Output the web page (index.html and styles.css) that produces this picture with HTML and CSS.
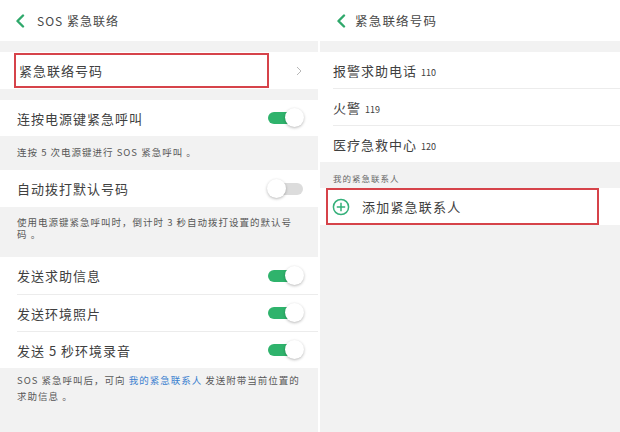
FILE: index.html
```html
<!DOCTYPE html>
<html lang="zh">
<head>
<meta charset="utf-8">
<link rel="stylesheet" href="styles.css">
</head>
<body>
<div class="screens">
  <section class="panel panel-left">
    <header class="topbar">
      <svg class="back" width="10" height="14" viewBox="0 0 10 14"><path d="M8 1.5 L2.5 7 L8 12.5" fill="none" stroke="#2fa86b" stroke-width="2.4" stroke-linecap="round" stroke-linejoin="round"/></svg>
      <span class="title">SOS 紧急联络</span>
    </header>
    <div class="band"></div>
    <div class="row nav-row">
      <span class="label">紧急联络号码</span>
      <svg class="chev" width="6" height="10" viewBox="0 0 6 10"><path d="M1 1 L5 5 L1 9" fill="none" stroke="#b8b8b8" stroke-width="1"/></svg>
      <div class="mark mark-left"></div>
    </div>
    <div class="band"></div>
    <div class="row">
      <span class="label">连按电源键紧急呼叫</span>
      <span class="switch on"><span class="knob"></span></span>
    </div>
    <p class="desc desc-1">连按 5 次电源键进行 SOS 紧急呼叫 。</p>
    <div class="row row-auto">
      <span class="label">自动拨打默认号码</span>
      <span class="switch off"><span class="knob"></span></span>
    </div>
    <p class="desc desc-2">使用电源键紧急呼叫时，倒计时 3 秒自动拨打设置的默认号码 。</p>
    <div class="group">
      <div class="row grow">
        <span class="label">发送求助信息</span>
        <span class="switch on"><span class="knob"></span></span>
      </div>
      <div class="row grow">
        <span class="label">发送环境照片</span>
        <span class="switch on"><span class="knob"></span></span>
      </div>
      <div class="row grow">
        <span class="label">发送 5 秒环境录音</span>
        <span class="switch on"><span class="knob"></span></span>
      </div>
    </div>
    <p class="desc desc-3">SOS 紧急呼叫后，可向 <span class="link">我的紧急联系人</span> 发送附带当前位置的求助信息 。</p>
  </section>

  <section class="panel panel-right">
    <header class="topbar topbar-r">
      <svg class="back" width="10" height="14" viewBox="0 0 10 14"><path d="M8 1.5 L2.5 7 L8 12.5" fill="none" stroke="#2fa86b" stroke-width="2.4" stroke-linecap="round" stroke-linejoin="round"/></svg>
      <span class="title title-r">紧急联络号码</span>
    </header>
    <div class="band"></div>
    <div class="list">
      <div class="row rrow"><span class="label">报警求助电话 <span class="num">110</span></span></div>
      <div class="row rrow"><span class="label">火警 <span class="num">119</span></span></div>
      <div class="row rrow"><span class="label">医疗急救中心 <span class="num">120</span></span></div>
    </div>
    <div class="section-label">我的紧急联系人</div>
    <div class="row add-row">
      <svg class="plus" width="18" height="18" viewBox="0 0 18 18"><circle cx="9" cy="9" r="7.6" fill="none" stroke="#35b07a" stroke-width="1.5"/><path d="M9 4.8 V13.2 M4.8 9 H13.2" stroke="#35b07a" stroke-width="1.5"/></svg>
      <span class="label add-label">添加紧急联系人</span>
      <div class="mark mark-right"></div>
    </div>
  </section>
</div>
</body>
</html>
```

FILE: styles.css
```css
* { box-sizing: border-box; margin: 0; padding: 0; }

html, body {
  width: 620px;
  height: 432px;
  overflow: hidden;
  background: #ffffff;
}

body {
  font-family: "Noto Sans CJK SC", "Noto Sans", sans-serif;
  color: #444;
}

.screens {
  display: flex;
  gap: 2px;
  height: 432px;
}

.panel {
  background: #f2f2f2;
  display: flex;
  flex-direction: column;
  height: 432px;
}

.panel-left { width: 318px; }
.panel-right { width: 300px; }

.topbar {
  height: 41px;
  background: #ffffff;
  display: flex;
  align-items: center;
  padding-left: 15px;
  gap: 12px;
}

.topbar-r { padding-left: 16px; gap: 9px; }

.back { flex: none; }

.title {
  font-size: 12px;
  letter-spacing: 1px;
  color: #484848;
}

.title-r { font-size: 12.5px; letter-spacing: 1.2px; }

.band { height: 11px; flex: none; }

.row {
  position: relative;
  background: #ffffff;
  display: flex;
  align-items: center;
  justify-content: space-between;
  height: 36px;
  padding: 0 14px 0 17px;
  flex: none;
}

.label {
  font-size: 13px;
  letter-spacing: 1px;
  color: #404040;
}

.nav-row { height: 37px; padding-left: 19px; }
.chev { margin-right: 2px; }

.mark {
  position: absolute;
  border: 2px solid #d6434a;
  pointer-events: none;
}

.mark-left { left: 14px; top: 1px; width: 255px; height: 35px; }
.mark-right { left: 6px; top: 0; width: 273px; height: 37px; }

.row-auto { height: 37px; }

.switch {
  position: relative;
  width: 37px;
  height: 20px;
  flex: none;
}

.switch::before {
  content: "";
  position: absolute;
  left: 1px;
  right: 1px;
  top: 4px;
  height: 12px;
  border-radius: 6px;
  background: #2fb36c;
}

.switch.off::before { background: #dcdcdc; }

.knob {
  position: absolute;
  top: 0;
  width: 19px;
  height: 19px;
  border-radius: 50%;
  background: #ffffff;
  box-shadow: 0 1px 3px rgba(0,0,0,0.28);
}

.switch.on .knob { right: 0; }
.switch.off .knob { left: 0; }

.desc {
  font-size: 9.5px;
  letter-spacing: 1px;
  color: #585858;
  padding: 0 18px 0 17px;
  flex: none;
}

.desc-1 { height: 34px; line-height: 32px; }
.desc-2 { height: 50px; padding-top: 9px; line-height: 12px; }
.desc-3 { padding-top: 4px; line-height: 16px; }

.link { color: #3a7fd0; }

.group {
  background: #ffffff;
  display: flex;
  flex-direction: column;
  flex: none;
  padding-left: 17px;
}

.grow { height: 37px; padding-left: 0; }
.grow + .grow { border-top: 1px solid #ececec; }

.list { background: #ffffff; padding-left: 13px; display: flex; flex-direction: column; flex: none; }

.rrow {
  padding-left: 0;
  height: 37px;
  justify-content: flex-start;
}
.rrow:first-child { height: 36px; }
.rrow + .rrow { border-top: 1px solid #ececec; }

.num { font-size: 9px; letter-spacing: 0; }

.section-label {
  height: 26px;
  font-size: 8.5px;
  letter-spacing: 1px;
  color: #666;
  padding: 10px 0 0 13px;
  flex: none;
}

.add-row {
  height: 37px;
  padding-left: 12px;
  justify-content: flex-start;
  gap: 12px;
}

.add-label { font-size: 13px; letter-spacing: 1.2px; }
```
